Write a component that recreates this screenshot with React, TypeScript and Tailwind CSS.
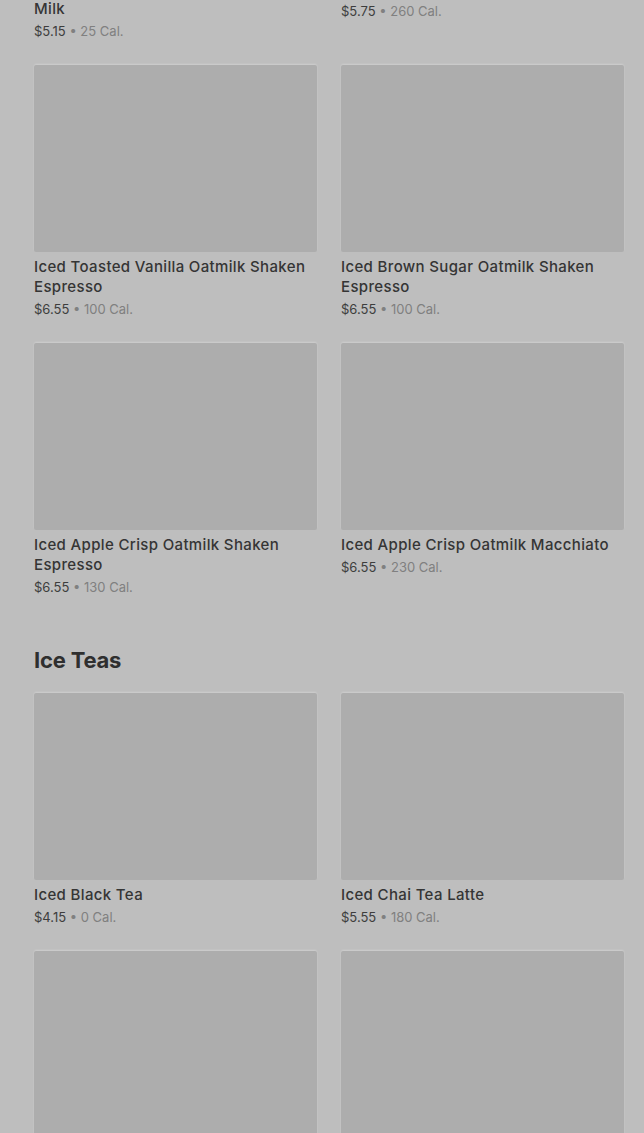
import React from "react";

type Item = { name: string; price: string; cal: string };

const rows: Item[][] = [
  [
    { name: "Iced Pumpkin Cream Chai with Oat Milk", price: "$5.15", cal: "25 Cal." },
    { name: "Iced Caramel Macchiato", price: "$5.75", cal: "260 Cal." },
  ],
  [
    { name: "Iced Toasted Vanilla Oatmilk Shaken Espresso", price: "$6.55", cal: "100 Cal." },
    { name: "Iced Brown Sugar Oatmilk Shaken Espresso", price: "$6.55", cal: "100 Cal." },
  ],
  [
    { name: "Iced Apple Crisp Oatmilk Shaken Espresso", price: "$6.55", cal: "130 Cal." },
    { name: "Iced Apple Crisp Oatmilk Macchiato", price: "$6.55", cal: "230 Cal." },
  ],
];

const teas: Item[][] = [
  [
    { name: "Iced Black Tea", price: "$4.15", cal: "0 Cal." },
    { name: "Iced Chai Tea Latte", price: "$5.55", cal: "180 Cal." },
  ],
  [
    { name: "Iced Green Tea", price: "$4.15", cal: "0 Cal." },
    { name: "Iced Matcha Tea Latte", price: "$5.55", cal: "200 Cal." },
  ],
];

function Card({ item }: { item: Item }) {
  return (
    <div className="flex flex-col">
      <div className="h-[187px] rounded-[2px] bg-[#adadad] shadow-[0_-1px_2px_rgba(255,255,255,0.25)]" />
      <div className="mt-[5px] text-[15px] leading-[20px] font-medium tracking-[0.35px] text-[#353535]">
        {item.name}
      </div>
      <div className="mt-[2px] text-[13px] leading-[20px] text-[#3d3d3d]">
        {item.price}
        <span className="text-[#808080]"> • {item.cal}</span>
      </div>
    </div>
  );
}

function Grid({ data }: { data: Item[][] }) {
  return (
    <div className="flex flex-col gap-[24px]">
      {data.map((r, i) => (
        <div key={i} className="grid grid-cols-2 items-start gap-x-[24px]">
          {r.map((it) => (
            <Card key={it.name} item={it} />
          ))}
        </div>
      ))}
    </div>
  );
}

export default function App() {
  return (
    <main
      className="h-[1133px] overflow-hidden bg-[#bebebe]"
      style={{ fontFamily: "Inter, 'Noto Sans', sans-serif" }}
    >
      <div className="-mt-[213px] pl-[34px] pr-[20px]">
        <Grid data={rows} />
        <h2 className="mt-[48px] mb-[18px] text-[22px] leading-[30px] font-bold tracking-[-0.2px] text-[#2f2f2f]">
          Ice Teas
        </h2>
        <Grid data={teas} />
      </div>
    </main>
  );
}
